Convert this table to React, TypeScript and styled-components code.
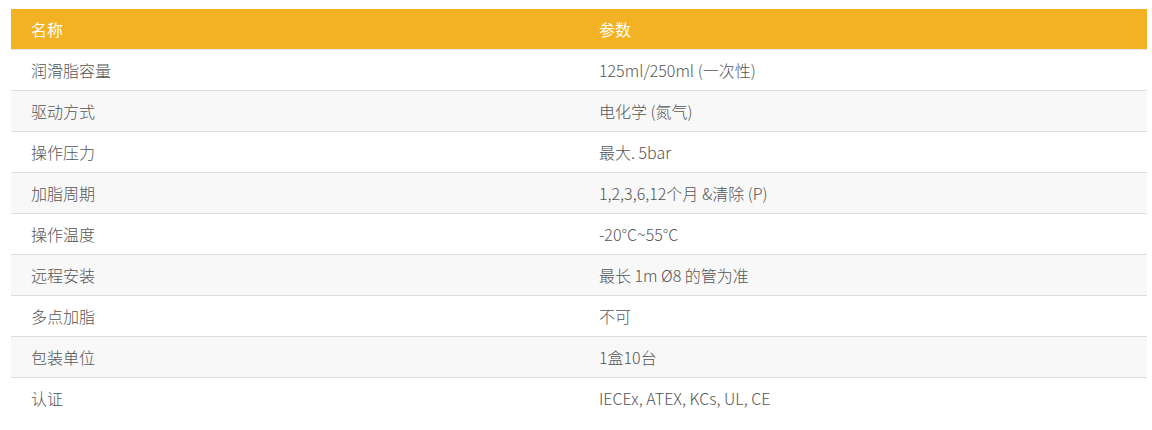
import styled, { createGlobalStyle } from "styled-components";

const GlobalStyle = createGlobalStyle`
  body {
    margin: 0;
    background: #fff;
    font-family: "Noto Sans CJK SC", "Noto Sans", sans-serif;
  }
`;

const Page = styled.div`
  padding: 9px 5px 0 11px;
`;

const Table = styled.table`
  width: 1136px;
  border-collapse: collapse;
  table-layout: fixed;
  font-size: 16px;
  font-weight: 300;
`;

const HeadRow = styled.tr`
  background-color: #f3b223;
  height: 40px;
`;

const HeadCell = styled.th`
  color: #fff;
  font-weight: 400;
  text-align: left;
  padding: 0 20px;
  border-bottom: 1px solid #e6e6e6;
`;

interface RowProps {
  $striped: boolean;
}

const Row = styled.tr<RowProps>`
  height: 41px;
  background-color: ${(props) => (props.$striped ? "#f8f8f8" : "#fff")};
  border-bottom: 1px solid #dddddd;
  &:last-child {
    border-bottom: none;
  }
`;

const Cell = styled.td`
  color: #555;
  padding: 0 20px;
  vertical-align: middle;
`;

const specs: Array<[string, string]> = [
  ["润滑脂容量", "125ml/250ml (一次性)"],
  ["驱动方式", "电化学 (氮气)"],
  ["操作压力", "最大. 5bar"],
  ["加脂周期", "1,2,3,6,12个月 &清除 (P)"],
  ["操作温度", "-20°C~55°C"],
  ["远程安装", "最长 1m Ø8 的管为准"],
  ["多点加脂", "不可"],
  ["包装单位", "1盒10台"],
  ["认证", "IECEx, ATEX, KCs, UL, CE"],
];

const App = () => {
  return (
    <Page>
      <GlobalStyle />
      <Table>
        <thead>
          <HeadRow>
            <HeadCell>名称</HeadCell>
            <HeadCell>参数</HeadCell>
          </HeadRow>
        </thead>
        <tbody>
          {specs.map(([name, value], i) => (
            <Row key={name} $striped={i % 2 === 1}>
              <Cell>{name}</Cell>
              <Cell>{value}</Cell>
            </Row>
          ))}
        </tbody>
      </Table>
    </Page>
  );
};

export default App;
